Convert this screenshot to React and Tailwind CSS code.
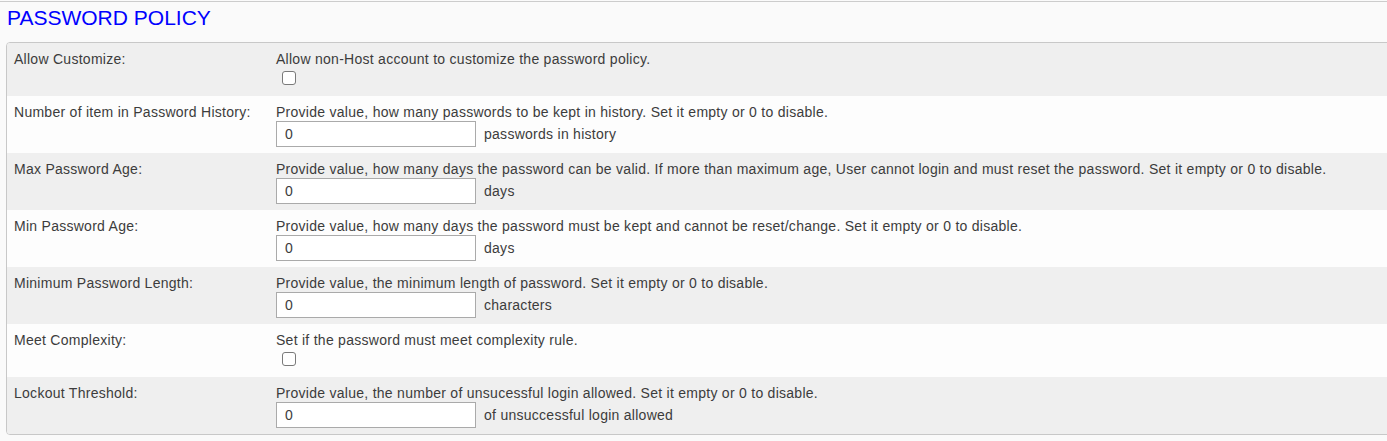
import React from 'react'

const rows = [
  { label: 'Allow Customize:', desc: 'Allow non-Host account to customize the password policy.', type: 'check' },
  { label: 'Number of item in Password History:', desc: 'Provide value, how many passwords to be kept in history. Set it empty or 0 to disable.', unit: 'passwords in history' },
  { label: 'Max Password Age:', desc: 'Provide value, how many days the password can be valid. If more than maximum age, User cannot login and must reset the password. Set it empty or 0 to disable.', unit: 'days' },
  { label: 'Min Password Age:', desc: 'Provide value, how many days the password must be kept and cannot be reset/change. Set it empty or 0 to disable.', unit: 'days' },
  { label: 'Minimum Password Length:', desc: 'Provide value, the minimum length of password. Set it empty or 0 to disable.', unit: 'characters' },
  { label: 'Meet Complexity:', desc: 'Set if the password must meet complexity rule.', type: 'check' },
  { label: 'Lockout Threshold:', desc: 'Provide value, the number of unsucessful login allowed. Set it empty or 0 to disable.', unit: 'of unsuccessful login allowed' },
]

export default function App() {
  return (
    <div className="min-h-[441px] overflow-hidden bg-[#fafafa] pt-px text-[14px] leading-[15px] tracking-[0.27px] text-[#3c3c3c] [font-family:'Liberation_Sans',Arial,sans-serif]">
      {/* page header */}
      <div className="h-[41px] border-t border-[#cccccc] pl-[7px] pt-[4px]">
        <h1 className="text-[21px] leading-[24px] tracking-normal text-[#0000ff]">PASSWORD POLICY</h1>
      </div>

      <div className="ml-[6px] -mr-2 overflow-hidden rounded-l-[4px] border border-[#c8c8c8]">
        {rows.map((r, i) => (
          <div key={i} className={`flex ${i % 2 === 0 ? 'bg-[#efefef]' : 'bg-[#fdfdfd]'}`}>
            <div className="w-[269px] shrink-0 pl-[7px] pt-[9px]">{r.label}</div>
            <div className={r.type === 'check' ? 'pt-[9px] pb-[11px]' : 'pt-[9px] pb-[6px]'}>
              <div>{r.desc}</div>
              {r.type === 'check' ? (
                <input
                  type="checkbox"
                  className="ml-[6px] mt-[4px] block h-[14px] w-[14px] appearance-none rounded-[3px] border border-[#7a7a7a] bg-white"
                />
              ) : (
                <div className="mt-px flex items-center">
                  <input
                    type="text"
                    defaultValue="0"
                    className="h-[26px] w-[200px] border border-[#aaaaaa] bg-white pl-[8px] text-[14px] text-[#3c3c3c] outline-none"
                  />
                  <span className="ml-[8px]">{r.unit}</span>
                </div>
              )}
            </div>
          </div>
        ))}
      </div>
    </div>
  )
}
